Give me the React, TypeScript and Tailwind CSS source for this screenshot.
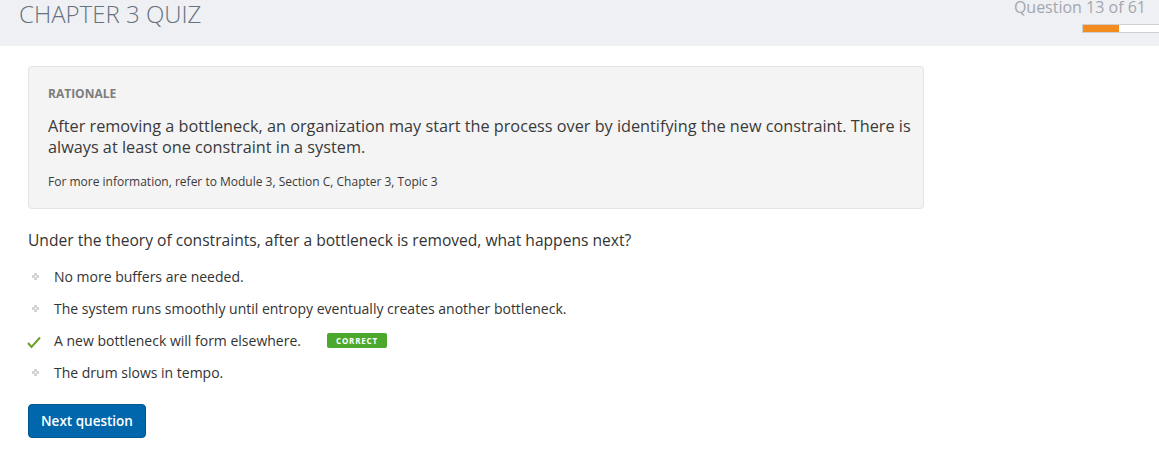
import React from "react";

const options = [
  { text: "No more buffers are needed.", correct: false },
  { text: "The system runs smoothly until entropy eventually creates another bottleneck.", correct: false },
  { text: "A new bottleneck will form elsewhere.", correct: true },
  { text: "The drum slows in tempo.", correct: false },
];

export default function App() {
  return (
    <div className="w-[1159px] h-[450px] bg-white overflow-hidden" style={{ fontFamily: '"Open Sans", sans-serif' }}>
      <div className="h-[46px] bg-[#eff0f4] flex justify-between">
        <div className="pl-[19px] text-[24px] leading-[27px] font-light text-[#66727f]">CHAPTER 3 QUIZ</div>
        <div className="flex flex-col items-end pr-[13px]">
          <div className="text-[16px] leading-[14px] text-[#a3a7ad]">Question 13 of 61</div>
          <div className="mt-[10px] mr-[-13px] w-[77px] h-[9px] bg-white border border-[#cfcfcf] border-r-0">
            <div className="h-full w-[36px] bg-[#f28c1e]" />
          </div>
        </div>
      </div>
      <div className="pl-[28px] pt-[20px]">
        <div className="w-[896px] bg-[#f4f4f4] border border-[#e4e4e4] rounded-[4px] pl-[19px] pr-[10px] pt-[19px] pb-[19px]">
          <div className="text-[12px] leading-[16px] font-bold text-[#7d7d7d]">RATIONALE</div>
          <div className="mt-[14px] text-[16.25px] leading-[21px] text-[#3a3a3a]">
            After removing a bottleneck, an organization may start the process over by identifying the new constraint. There is always at least one constraint in a system.
          </div>
          <div className="mt-[17px] text-[12px] leading-[14px] text-[#3a3a3a]">
            For more information, refer to Module 3, Section C, Chapter 3, Topic 3
          </div>
        </div>
        <div className="mt-[20px] text-[15.6px] leading-[22px] text-[#333]">
          Under the theory of constraints, after a bottleneck is removed, what happens next?
        </div>
        <div className="mt-[16px] flex flex-col gap-[13px]">
          {options.map((o) => (
            <div key={o.text} className="flex items-center h-[19px]">
              <div className="w-[26px] flex items-center">
                {o.correct ? (
                  <svg width="14" height="13" viewBox="0 0 14 13" className="ml-[-1px] mt-[3px]">
                    <path d="M1 7 L4.5 11 L13 1.5" fill="none" stroke="#6aa32a" strokeWidth="2" />
                  </svg>
                ) : (
                  <svg width="7" height="7" viewBox="0 0 7 7" className="ml-[4px]">
                    <rect x="2" y="0" width="3" height="7" fill="#d3d3d3" />
                    <rect x="0" y="2" width="7" height="3" fill="#d3d3d3" />
                    <rect x="2.5" y="2.5" width="2" height="2" fill="#f3f3f3" />
                  </svg>
                )}
              </div>
              <div className="text-[14px] leading-[19px] text-[#333]">{o.text}</div>
              {o.correct && (
                <div className="ml-[26px] bg-[#4ca82c] rounded-[2px] h-[15px] w-[60px] flex items-center justify-center text-[8px] font-bold tracking-[0.8px] text-white">
                  CORRECT
                </div>
              )}
            </div>
          ))}
        </div>
        <button className="mt-[22px] h-[34px] w-[118px] bg-[#0067ad] border border-[#00548f] rounded-[4px] text-white text-[13.5px] font-semibold">
          Next question
        </button>
      </div>
    </div>
  );
}
